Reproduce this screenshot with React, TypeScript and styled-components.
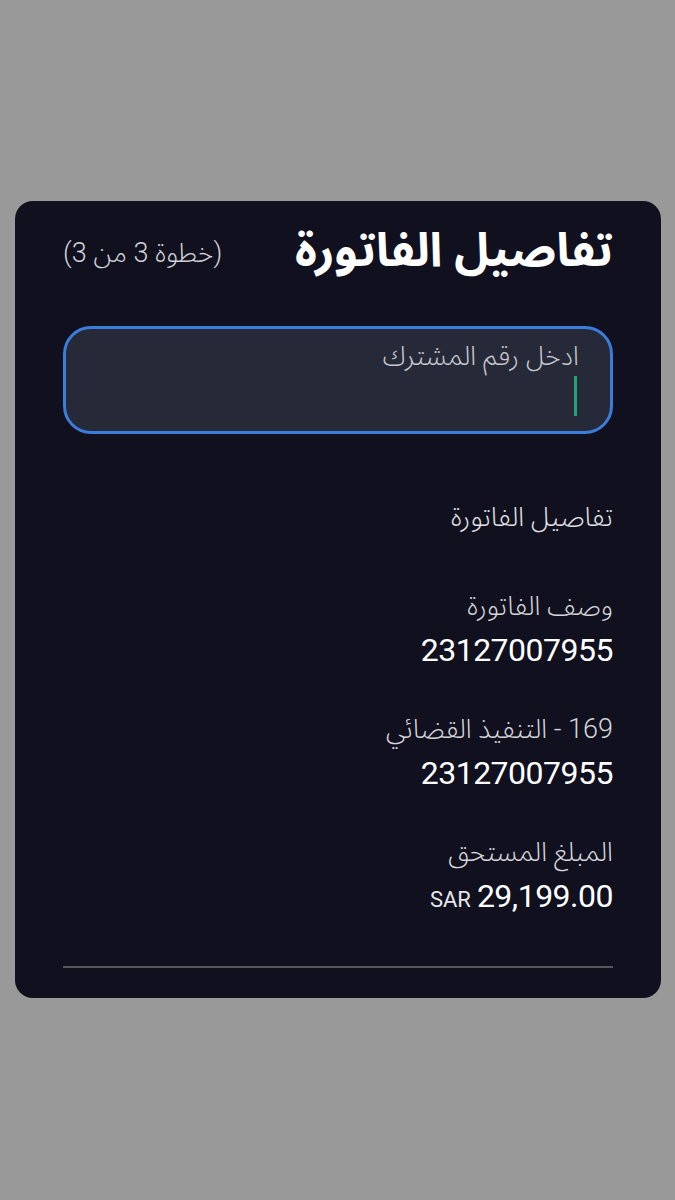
import React from "react";
import styled, { createGlobalStyle } from "styled-components";

const Global = createGlobalStyle`
  html, body { margin: 0; padding: 0; background: #999999; }
  body { font-family: "Roboto", "Noto Sans Arabic", "Noto Sans", "DejaVu Sans", sans-serif; }
`;

const Page = styled.div`
  min-height: 1200px;
  box-sizing: border-box;
  padding: 201px 14px 0 15px;
`;

const Card = styled.div`
  direction: rtl;
  background: #10101f;
  border-radius: 18px;
  height: 797px;
  box-sizing: border-box;
  padding: 16px 48px 0 48px;
  display: flex;
  flex-direction: column;
`;

const Header = styled.div`
  display: flex;
  justify-content: space-between;
  align-items: center;
`;

const Title = styled.h1`
  margin: 0;
  font-size: 47px;
  font-weight: 700;
  color: #ffffff;
  line-height: 66px;
`;

const Step = styled.span`
  font-size: 27px;
  font-weight: 300;
  color: #d0d0d6;
  margin-top: 6px;
`;

const InputBox = styled.div`
  margin-top: 43px;
  height: 108px;
  box-sizing: border-box;
  border: 3px solid #3b7ddb;
  border-radius: 28px;
  background: #262a38;
  padding: 8px 31px 0 31px;
  display: flex;
  flex-direction: column;
  align-items: flex-start;
`;

const Placeholder = styled.span`
  font-size: 27px;
  font-weight: 300;
  color: #c7c8cd;
  line-height: 38px;
`;

const Caret = styled.span`
  width: 3px;
  height: 40px;
  margin-top: 1px;
  margin-right: 2px;
  background: #22a07c;
`;

const SectionTitle = styled.div`
  margin-top: 65px;
  font-size: 27px;
  font-weight: 300;
  color: #e2e2e6;
  line-height: 36px;
`;

const Field = styled.div<{ $gap?: number }>`
  margin-top: ${(p) => p.$gap ?? 35}px;
  display: flex;
  flex-direction: column;
  align-items: flex-start;
`;

const Label = styled.span`
  font-size: 27px;
  font-weight: 300;
  color: #d6d6da;
  line-height: 42px;
`;

const Value = styled.span`
  direction: ltr;
  font-family: "Roboto", "Noto Sans", sans-serif;
  font-size: 32px;
  font-weight: 400;
  letter-spacing: -0.5px;
  color: #ffffff;
  line-height: 46px;
`;

const Currency = styled.span`
  font-size: 22px;
  font-weight: 400;
  letter-spacing: 0;
  margin-right: 6px;
  color: #e6e6ea;
`;

const Divider = styled.hr`
  margin: 43px 0 0 0;
  border: none;
  height: 2px;
  background: #55565f;
`;

export default function App() {
  return (
    <Page>
      <Global />
      <Card>
        <Header>
          <Title>تفاصيل الفاتورة</Title>
          <Step>(خطوة 3 من 3)</Step>
        </Header>
        <InputBox>
          <Placeholder>ادخل رقم المشترك</Placeholder>
          <Caret />
        </InputBox>
        <SectionTitle>تفاصيل الفاتورة</SectionTitle>
        <Field $gap={50}>
          <Label>وصف الفاتورة</Label>
          <Value>23127007955</Value>
        </Field>
        <Field>
          <Label>169 - التنفيذ القضائي</Label>
          <Value>23127007955</Value>
        </Field>
        <Field>
          <Label>المبلغ المستحق</Label>
          <Value>
            <Currency>SAR</Currency>29,199.00
          </Value>
        </Field>
        <Divider />
      </Card>
    </Page>
  );
}
